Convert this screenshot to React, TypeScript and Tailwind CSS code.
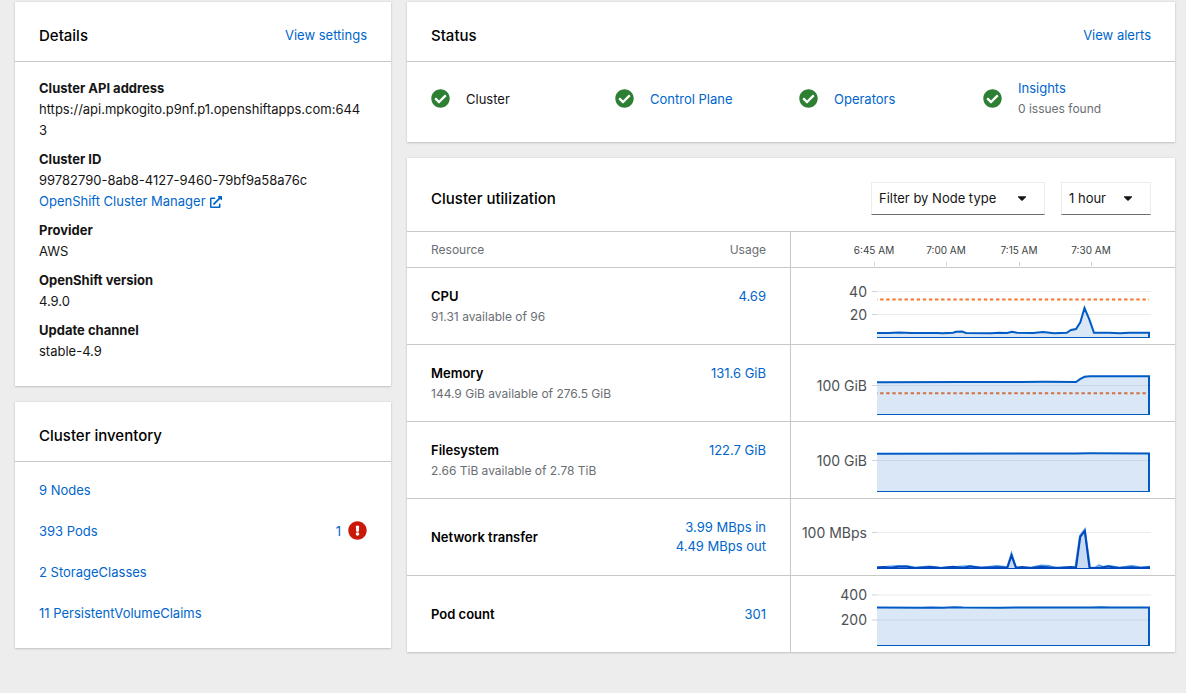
import { useId, type ReactNode } from "react";
import { FaCaretDown, FaCheckCircle, FaExclamationCircle, FaExternalLinkAlt } from "react-icons/fa";

const BLUE = "#005bc4";
const PLOT_LEFT = 86;
const PLOT_RIGHT = 358;
const PLOT_BOTTOM = 70;

type Point = [number, number];

function Link({ children, className = "" }: { children: ReactNode; className?: string }) {
  return (
    <a href="#" className={`text-[#0066cc] hover:underline ${className}`}>
      {children}
    </a>
  );
}

function Card({ title, action, children }: { title: string; action?: ReactNode; children: ReactNode }) {
  return (
    <section className="bg-white shadow-[0_1px_2px_rgba(3,3,3,0.16),0_0_2px_rgba(3,3,3,0.08)]">
      <header className="flex h-15 items-center justify-between border-b border-[#c7c7c7] px-6 pt-2">
        <h2 className="text-[15px] font-medium text-black">{title}</h2>
        {action}
      </header>
      {children}
    </section>
  );
}

function Detail({ label, children }: { label: string; children: ReactNode }) {
  return (
    <div>
      <dt className="font-bold">{label}</dt>
      <dd>{children}</dd>
    </div>
  );
}

function StatusItem({ label, note, plain }: { label: string; note?: string; plain?: boolean }) {
  return (
    <li className="flex items-center gap-4">
      <FaCheckCircle className="size-[19px] shrink-0 text-[#2d7f33]" aria-hidden />
      <div className="leading-5">
        {plain ? <span>{label}</span> : <Link>{label}</Link>}
        {note && <div className="text-xs leading-[21px] text-[#6a6e73]">{note}</div>}
      </div>
    </li>
  );
}

function Dropdown({ label, options, className }: { label: string; options: string[]; className: string }) {
  return (
    <div className={`relative ${className}`}>
      <select
        aria-label={label}
        className="block h-[33px] w-full appearance-none border border-[#ededed] border-b-[#6a6e73] bg-white pl-[7px] text-[13px] text-[#151515]"
      >
        {options.map((option) => (
          <option key={option}>{option}</option>
        ))}
      </select>
      <FaCaretDown className="pointer-events-none absolute top-[9px] right-4 size-[14px] text-[#151515]" aria-hidden />
    </div>
  );
}

function TimeAxis() {
  const ticks: [number, string][] = [
    [83, "6:45 AM"],
    [155, "7:00 AM"],
    [228, "7:15 AM"],
    [300, "7:30 AM"],
  ];
  return (
    <svg viewBox="0 0 384 35" className="block h-[35px] w-full">
      {ticks.map(([x, text]) => (
        <g key={text}>
          <text x={x} y={22} textAnchor="middle" className="fill-[#3c3f42] text-[10px]">
            {text}
          </text>
          <path d={`M${x + 0.5} 30V34`} stroke="#d2d2d2" />
        </g>
      ))}
    </svg>
  );
}

interface ChartProps {
  grid: { y: number; label: string }[];
  line: Point[];
  secondary?: Point[];
  limit?: number;
  color?: string;
}

function Chart({ grid, line, secondary, limit, color = BLUE }: ChartProps) {
  const clip = useId();
  const toPath = (points: Point[]) =>
    `M${points.map((p) => p.join(" ")).join("L")}L${PLOT_RIGHT} ${PLOT_BOTTOM}H${PLOT_LEFT}`;
  return (
    <svg viewBox="0 0 384 76" className="block h-[76px] w-full">
      <clipPath id={clip}>
        <rect x={PLOT_LEFT} y={0} width={273} height={PLOT_BOTTOM} />
      </clipPath>
      {grid.map(({ y, label }) => (
        <g key={label}>
          <text x={76} y={y + 5} textAnchor="end" className="fill-[#4d5054] text-[14px]">
            {label}
          </text>
          <path d={`M81 ${y}H86`} stroke="#d2d2d2" />
          <path d={`M86 ${y}H360`} stroke="#ebebeb" />
        </g>
      ))}
      <g clipPath={`url(#${clip})`}>
        {limit !== undefined && (
          <path d={`M83 ${limit}H358`} stroke="#f4762f" strokeWidth={2} strokeDasharray="3.4 2.7" fill="none" />
        )}
        {secondary && (
          <path d={toPath(secondary)} fill="#519de9" fillOpacity={0.1} stroke="#519de9" strokeWidth={2} />
        )}
        <path d={toPath(line)} fill={color} fillOpacity={0.15} stroke={color} strokeWidth={2} />
      </g>
    </svg>
  );
}

const cpu: Point[] = [
  [86, 65], [97, 65], [108, 64.5], [120, 65], [146, 65], [152, 65.3], [162, 64.7], [165, 63.7], [171, 63.6],
  [175, 65], [200, 65.2], [208, 64.7], [216, 65], [221, 63.7], [226, 64.8], [242, 65], [252, 63.9], [263, 65.2],
  [275.7, 64.8], [280, 62], [285, 61], [289.3, 54.3], [293.5, 40], [298.3, 51.3], [303, 64.8], [318, 64.7],
  [329, 65.2], [338, 64.7], [358, 64.8],
];
const memory: Point[] = [
  [86, 37.2], [170, 37], [230, 37.1], [254, 36.8], [285, 37], [289, 34.2], [293.5, 31.8], [299, 31.3], [358, 31.3],
];
const filesystem: Point[] = [[86, 31.7], [240, 31.6], [285, 31.4], [298, 31.2], [358, 31.4]];
const networkOut: Point[] = [
  [86, 68.6], [93, 68], [100, 69], [107, 67.8], [116, 67.8], [124, 69], [140, 68], [150, 69], [162, 67.8], [172, 69],
  [179, 67.6], [190, 68.8], [208, 68.2], [216.3, 68.8], [220.5, 56.5], [225, 68.8], [231, 68], [240, 69], [250, 67.8],
  [258, 68.6], [268, 69], [280, 68], [285, 68.8], [289.2, 38], [293.8, 32], [298.5, 68.7], [308, 69], [317, 67.6],
  [328, 69], [340, 68.2], [350, 69], [358, 68.4],
];
const networkIn: Point[] = [
  [86, 68.6], [107, 66.9], [116, 67], [124, 68.8], [138, 67.4], [150, 69], [179, 66.9], [190, 68.8], [206, 67],
  [216.3, 68.2], [220.5, 54.5], [225, 68.8], [240, 68.8], [250, 66.6], [258, 67], [264, 68.8], [284.5, 68],
  [289, 37], [293.8, 30.5], [299, 68.7], [304, 68.8], [308, 66.4], [312, 68], [318, 66.8], [328, 68.8], [341, 67],
  [350, 68.4], [358, 67.8],
];
const pods: Point[] = [
  [86, 31.6], [130, 31.7], [140, 31.4], [152, 31.7], [163, 31.2], [172, 31.6], [210, 31.7], [224, 31.4], [300, 31.6],
  [310, 31.3], [320, 31.5], [358, 31.5],
];

const resources: { name: string; note?: string; usage: string[]; chart: ChartProps }[] = [
  {
    name: "CPU",
    note: "91.31 available of 96",
    usage: ["4.69"],
    chart: { grid: [{ y: 23.5, label: "40" }, { y: 46.5, label: "20" }], line: cpu, limit: 31.4 },
  },
  {
    name: "Memory",
    note: "144.9 GiB available of 276.5 GiB",
    usage: ["131.6 GiB"],
    chart: { grid: [{ y: 40.5, label: "100 GiB" }], line: memory, limit: 48.2 },
  },
  {
    name: "Filesystem",
    note: "2.66 TiB available of 2.78 TiB",
    usage: ["122.7 GiB"],
    chart: { grid: [{ y: 38.5, label: "100 GiB" }], line: filesystem },
  },
  {
    name: "Network transfer",
    usage: ["3.99 MBps in", "4.49 MBps out"],
    chart: { grid: [{ y: 33.5, label: "100 MBps" }], line: networkOut, secondary: networkIn, color: "#0046bd" },
  },
  {
    name: "Pod count",
    usage: ["301"],
    chart: { grid: [{ y: 19, label: "400" }, { y: 44, label: "200" }], line: pods },
  },
];

function Utilization() {
  return (
    <section className="bg-white shadow-[0_1px_2px_rgba(3,3,3,0.16),0_0_2px_rgba(3,3,3,0.08)]">
      <header className="flex items-center justify-between px-6 pt-6 pb-4">
        <h2 className="text-[15px] font-medium text-black">Cluster utilization</h2>
        <div className="flex gap-4">
          <Dropdown label="Node type" options={["Filter by Node type", "master", "worker"]} className="w-[174px]" />
          <Dropdown label="Duration" options={["1 hour", "6 hours", "24 hours"]} className="w-[90px]" />
        </div>
      </header>
      <table className="w-full table-fixed border-separate border-spacing-0">
        <thead>
          <tr className="text-xs text-[#6a6e73] [&>th]:border-y [&>th]:border-[#c7c7c7] [&>th]:p-0 [&>th]:font-normal">
            <th scope="col" className="w-[30%] text-left">
              <span className="pl-6">Resource</span>
            </th>
            <th scope="col" className="w-[20%] border-r text-right">
              <span className="pr-6">Usage</span>
            </th>
            <th scope="col" className="w-[50%]" aria-label="Usage over time">
              <TimeAxis />
            </th>
          </tr>
        </thead>
        <tbody className="[&>tr:not(:last-child)>td]:border-b [&>tr:not(:last-child)>th]:border-b [&>tr>*]:border-[#c7c7c7]">
          {resources.map(({ name, note, usage, chart }) => (
            <tr key={name}>
              <th scope="row" className="py-0 pr-0 pl-6 text-left align-middle font-normal whitespace-nowrap">
                <div className="leading-5 font-semibold text-black">{name}</div>
                {note && <div className="text-xs leading-[21px] text-[#6a6e73]">{note}</div>}
              </th>
              <td className={`border-r pr-6 text-right leading-[19px] ${note ? "pt-[19px] align-top" : "align-middle"}`}>
                {usage.map((value) => (
                  <Link key={value} className="block">
                    {value}
                  </Link>
                ))}
              </td>
              <td className="p-0">
                <Chart {...chart} />
              </td>
            </tr>
          ))}
        </tbody>
      </table>
    </section>
  );
}

export default function App() {
  return (
    <main className="min-h-screen bg-[#ededed] pt-0.5 pr-[11px] pb-4 pl-[15px] font-['Inter',sans-serif] text-[13px] leading-[21px] text-[#151515]">
      <div className="grid grid-cols-12 items-start gap-4">
        <div className="col-span-4 flex flex-col gap-4">
          <Card title="Details" action={<Link>View settings</Link>}>
            <dl className="flex flex-col gap-2 px-6 pt-4 pb-6">
              <Detail label="Cluster API address">
                <span className="break-all">https://api.mpkogito.p9nf.p1.openshiftapps.com:6443</span>
              </Detail>
              <Detail label="Cluster ID">
                <div>99782790-8ab8-4127-9460-79bf9a58a76c</div>
                <Link className="inline-flex items-center gap-1">
                  OpenShift Cluster Manager
                  <FaExternalLinkAlt className="size-3" aria-hidden />
                </Link>
              </Detail>
              <Detail label="Provider">AWS</Detail>
              <Detail label="OpenShift version">4.9.0</Detail>
              <Detail label="Update channel">stable-4.9</Detail>
            </dl>
          </Card>
          <Card title="Cluster inventory">
            <ul className="px-6 pt-2 pb-[14px]">
              {["9 Nodes", "393 Pods", "2 StorageClasses", "11 PersistentVolumeClaims"].map((item) => (
                <li key={item} className="flex items-center justify-between py-[10px]">
                  <Link>{item}</Link>
                  {item === "393 Pods" && (
                    <Link className="flex items-start gap-[7px]">
                      1
                      <FaExclamationCircle className="size-[19px] text-[#c9190b]" aria-label="error" />
                    </Link>
                  )}
                </li>
              ))}
            </ul>
          </Card>
        </div>
        <div className="col-span-8 flex flex-col gap-4">
          <Card title="Status" action={<Link>View alerts</Link>}>
            <ul className="grid grid-cols-4 gap-4 px-6 pt-4 pb-[23px]">
              <StatusItem label="Cluster" plain />
              <StatusItem label="Control Plane" />
              <StatusItem label="Operators" />
              <StatusItem label="Insights" note="0 issues found" />
            </ul>
          </Card>
          <Utilization />
        </div>
      </div>
    </main>
  );
}
